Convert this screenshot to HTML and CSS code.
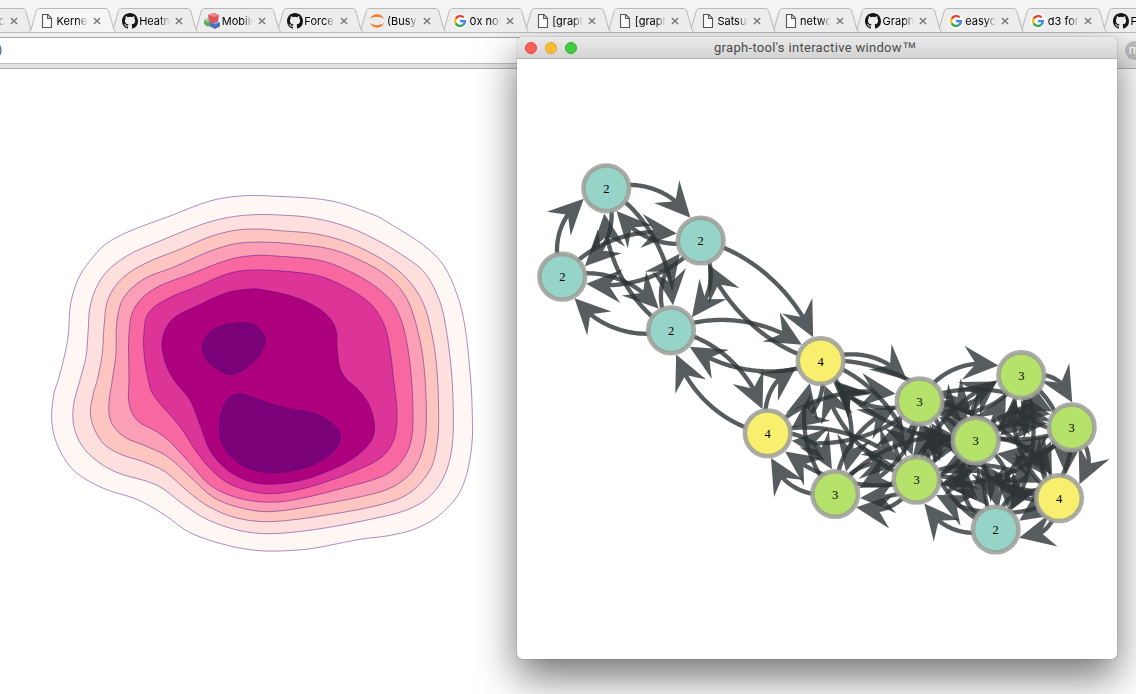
FILE: index.html
```
<!DOCTYPE html>
<html lang="en">
<head>
<meta charset="utf-8">
<title>Kernel density</title>
<link rel="stylesheet" href="styles.css">
</head>
<body>
<svg class="symbols" aria-hidden="true">
  <symbol id="page" viewBox="0 0 16 16"><path d="M3.5 1.5h5.3l3.7 3.8v9.2h-9z" fill="#fbfbfb" stroke="#555" stroke-width="1.1"/><path d="M8.6 1.5v4h4" fill="none" stroke="#555" stroke-width="1.1"/></symbol>
  <symbol id="github" viewBox="0 0 16 16"><path fill="#171515" d="M8 0C3.58 0 0 3.58 0 8c0 3.54 2.29 6.53 5.47 7.59.4.07.55-.17.55-.38 0-.19-.01-.82-.01-1.49-2.01.37-2.53-.49-2.69-.94-.09-.23-.48-.94-.82-1.13-.28-.15-.68-.52-.01-.53.63-.01 1.08.58 1.23.82.72 1.21 1.87.87 2.33.66.07-.52.28-.87.51-1.07-1.78-.2-3.64-.89-3.64-3.95 0-.87.31-1.59.82-2.15-.08-.2-.36-1.02.08-2.12 0 0 .67-.21 2.2.82a7.6 7.6 0 0 1 4 0c1.53-1.04 2.2-.82 2.2-.82.44 1.1.16 1.92.08 2.12.51.56.82 1.27.82 2.15 0 3.07-1.87 3.75-3.65 3.95.29.25.54.73.54 1.48 0 1.07-.01 1.93-.01 2.2 0 .21.15.46.55.38A8 8 0 0 0 16 8c0-4.42-3.58-8-8-8z"/></symbol>
  <symbol id="google" viewBox="0 0 16 16"><circle cx="8" cy="8" r="7.8" fill="#fff"/><g fill="none" stroke-width="2.3"><path d="M3.6 5.6A5 5 0 0 1 11.6 4.5" stroke="#ea4335"/><path d="M3.6 10.4A5 5 0 0 1 3.6 5.6" stroke="#fbbc05"/><path d="M11.3 11.7A5 5 0 0 1 3.6 10.4" stroke="#34a853"/><path d="M8 8.1h5A5 5 0 0 1 11.3 11.7" stroke="#4285f4"/></g></symbol>
  <symbol id="jupyter" viewBox="0 0 16 16"><path d="M1 6.2C2.2 3 5 1.300 8 1.300s5.800 1.700 7 4.900C13.300 4.500 11 3.800 8 3.800S2.700 4.500 1 6.200zM1 9.800c1.200 3.200 4 4.900 7 4.900s5.800-1.700 7-4.900c-1.700 1.700-4 2.400-7 2.400S2.700 11.500 1 9.800z" fill="#f37726"/></symbol>
  <symbol id="cubes" viewBox="0 0 16 16"><path d="M0 7l4-2 3 2v5l-3 2-4-3z" fill="#69a765"/><path d="M0 7l4-2 3 2-3 2z" fill="#a4d19d"/><path d="M6 9l5-1.500 5 2v4L11 16l-5-2.500z" fill="#4b72b5"/><path d="M6 9l5-1.500 5 2-5 2z" fill="#86a7db"/><path d="M4 2l6-2 5 2-1 6-5 2.500L5 8z" fill="#e0555b"/><path d="M4 2l6-2 5 2-5 2z" fill="#f08486"/></symbol>
  <symbol id="close" viewBox="0 0 8 8"><path d="M.9.9l6.200 6.200M7.100.9L.9 7.100" stroke="#777" stroke-width="1.400" fill="none"/></symbol>
  <symbol id="tabshape" viewBox="0 0 89 25"><path class="shape" d="M0 24.500C2 24.500 2.500 22.500 3.200 21L8 4C8.800 1.500 9.500.5 12 .5H77C79.500.5 80.200 1.500 81 4L85.800 21C86.500 22.500 87 24.500 89 24.500"/></symbol>
</svg>
<div class="browser">
  <nav class="tabs" id="tabs"></nav>
  <div class="toolbar">
    <div class="address">)</div>
    <div class="extension">m</div>
  </div>
  <main class="page">
    <svg class="density" id="density" viewBox="0 69 500 625" width="500" height="625"></svg>
  </main>
</div>
<section class="window">
  <header class="titlebar">
    <span class="light red"></span><span class="light amber"></span><span class="light green"></span>
    <h1 class="title">graph-tool's interactive window<span class="mark">™</span></h1>
  </header>
  <svg class="graph" id="graph" viewBox="517 59 600 600" width="600" height="600"></svg>
</section>
<script src="main.js"></script>
</body>
</html>
```
FILE: styles.css
```
* { box-sizing: border-box; }
body { margin: 0; width: 1136px; height: 694px; overflow: hidden; position: relative; background: #fff; font-family: Roboto, "Liberation Sans", sans-serif; }
.symbols { position: absolute; width: 0; height: 0; }
.browser { display: flex; flex-direction: column; height: 694px; }
.tabs { display: flex; height: 33px; padding-top: 8px; background: linear-gradient(#f6f6f6, #f2f2f2); border-bottom: 1px solid #bcbcbc; overflow: hidden; }
.tab { position: relative; flex: none; display: flex; align-items: center; width: 89px; height: 25px; margin-right: -6.4px; padding-left: 11.500px; }
.tab:first-child { margin-left: -55.100px; }
.tab .bg { position: absolute; inset: 0; width: 89px; height: 25px; fill: #ededed; stroke: #b9b9b9; }
.tab.active .bg { fill: #f6f6f6; }
.tab .icon { position: relative; width: 16px; height: 16px; flex: none; }
.tab .label { position: relative; width: 31px; margin-left: 1.500px; overflow: hidden; white-space: nowrap; font: 11px/16px Inter, sans-serif; color: #000; mask-image: linear-gradient(90deg, #000 66%, transparent); }
.tab.cut .label { display: flex; justify-content: flex-end; }
.tab .close { position: relative; width: 8px; height: 8px; margin-left: 5px; }
.toolbar { display: flex; align-items: flex-start; justify-content: space-between; height: 36px; padding-top: 4px; background: linear-gradient(#f3f3f3, #e2e2e2); border-bottom: 1px solid #b0b0b0; }
.address { width: 1040px; height: 27px; border: solid #a5a5a5; border-width: 1px 0; border-bottom-color: #bebebe; background: #fff; font: 12px/24px Roboto, sans-serif; color: #33507c; text-indent: -2px; }
.extension { flex: none; width: 19px; height: 19px; margin: 4px -8px 0 0; border-radius: 50%; background: #bdbdbd; color: #fff; font: 13px/17px Roboto, sans-serif; text-align: center; }
.page { flex: 1; background: #fff; }
.density { display: block; }
.density path { stroke: #3f007d; stroke-opacity: .55; stroke-width: .8; }
.window { position: absolute; left: 517px; top: 37px; width: 600px; height: 622px; border-radius: 5px; overflow: hidden; background: #fff; box-shadow: 0 0 1px rgba(0,0,0,.7), 0 18px 40px rgba(0,0,0,.55); }
.titlebar { display: flex; align-items: center; gap: 8px; height: 22px; padding-left: 8px; background: linear-gradient(#ebebeb, #d3d3d3); border-bottom: 1px solid #b1b1b1; }
.light { width: 12px; height: 12px; border-radius: 50%; border: 1px solid; }
.red { background: #fb5f5b; border-color: #df4744; }
.amber { background: #fcbc34; border-color: #dfa023; }
.green { background: #41cd3d; border-color: #2daf2a; }
.title { margin: 0 0 0 129px; font: 400 13px/21px Roboto, sans-serif; letter-spacing: .31px; color: #4b4b4b; white-space: nowrap; }
.mark { font: 14px/1 "Liberation Sans", sans-serif; }
.graph { display: block; }
.edge { opacity: .8; fill: #2e3436; }
.edge .shaft { fill: none; stroke: #2e3436; stroke-width: 4.300; }
.node circle { stroke: #9c9e99; stroke-opacity: .85; stroke-width: 4.600; }
.node text { font: 12.500px "Liberation Serif", serif; text-anchor: middle; fill: #000; }
```
FILE: main.js
```
const tabs = [
  ["page", "pc"], ["page", "Kernel"], ["github", "Heatmap"], ["cubes", "Mobile"], ["github", "Force-"],
  ["jupyter", "(Busy)"], ["google", "0x not"], ["page", "[graph"], ["page", "[graph"], ["page", "Satsum"],
  ["page", "netwo"], ["github", "Graph-"], ["google", "easyc"], ["google", "d3 for"], ["github", "Force"]
];
const use = (id, cls) => `<svg class="${cls}"><use href="#${id}"/></svg>`;
document.getElementById("tabs").innerHTML = tabs.map(([icon, label], i) =>
  `<div class="tab${i === 0 ? " cut" : i === 1 ? " active" : ""}" style="z-index:${i === 1 ? 30 : 20 - i}">` +
  use("tabshape", "bg") + use(icon, "icon") + `<span class="label">${label}</span>` + use("close", "close") + `</div>`).join("");

// Density contours, from the lowest level to the highest
const contours = [
  ["#fff7f3", "58.3,380 67.7,340 70.7,303.3 79.3,276.7 93.3,256.7 106.7,243.3 130,231 170,216 210,201 240,196 270,196 330,200.7 375,215.3 388.3,222.7 423.3,245 443.3,265 457.3,295 465,326.7 470.7,380 472,403.3 471.7,446.7 461.7,488.3 441.7,513.3 416.7,528.3 388.3,535.7 360,539.3 313.3,548.3 286.7,550.7 260,550.7 230,546 190,532.7 163.3,514 136.7,499.3 103.3,488.3 73.3,470 56.7,443.3 51.7,420 54,393.3"],
  ["#fde0dd", "80,380 86,356.7 88,333.3 90.7,303.3 103.3,275.7 126.7,256 160,241 200,225 226.7,217.7 253.3,214.7 280,215 313.3,218 350,227.7 380,241.7 403.3,255.7 423.3,271 435,290 443.3,313.3 451,366.7 453.3,413.3 451.7,450 443.3,478.3 428.3,497.7 406.7,510 373.3,518.7 316.7,529.3 270,533.7 240,530.7 206.7,519.3 183.3,504.3 156.7,485 113.3,471 86.7,451.7 74.7,430 73.3,406.7"],
  ["#fcc5c0", "97.3,380 102.3,353.3 104,326.7 108.3,298.3 123.3,277.3 146.7,262.7 180,249.3 210,236.7 235,230.3 260,229 280,230.7 316.7,234 350,243.3 383.3,260 406.7,278.3 423.3,303.3 431.7,333.3 436.7,366.7 438.7,413.3 437.3,443.3 430,470 410,492.7 383.3,504 326.7,515 270,521.7 236.7,518 210,507.3 190,493.3 165,471.7 143.3,461.7 120,454 101.7,441.7 90.7,416.7 93.3,393.3"],
  ["#fa9fb5", "112.3,380 116,353.3 116.7,323.3 123.3,298.3 143.3,279.3 173.3,267.3 193.3,258.3 216.7,248.7 240,243 270,242.3 300,244.7 333.3,249.7 366.7,263.3 390,278.3 406.7,298.3 416.7,326.7 423.3,360 426.3,406.7 424.3,443.3 413.3,470 393.3,486.7 366.7,495.3 323.3,504 270,511.7 240,507.7 213.3,497.3 190,476.7 166.7,456 143.3,445 125,437.3 111.7,423.3 108.7,406.7"],
  ["#f768a1", "129,380 129,333.3 134.3,308.3 153.3,289.3 190,274.3 230,259.3 256.7,255.3 280,256.3 316.7,259.7 340,267 370,282.7 391.7,301.7 403.3,326.7 410.7,370 413,420 410,445 400,463.3 383.3,476 343.3,488 300,498.7 270,502.3 236.7,497.7 210,485 190,463.3 170,441.7 156.7,431.7 136.7,420 129,403.3"],
  ["#dd3497", "148.3,380 144.7,360 143.7,336.7 148.3,313.3 168.3,298.3 196.7,286.7 226.7,274 246.7,270.3 270,270.3 310,274 330,279.7 356.7,293.3 373.3,306.7 385,326.7 390,350 393.3,376.7 397,413.3 394.3,438.3 383.3,455.7 360,469 326.7,481.7 293.3,491 266.7,493.7 240,488.3 220,477.7 200,456.7 180,426.7 153.3,395"],
  ["#ae017e", "174,380 165,361.7 162.3,340 171.7,320 196.7,306 226.7,292.7 250,289 260,289.3 293.3,296.7 320,309.3 335,326.7 337.3,350 340,368.3 347.3,380 356.7,388 368.3,403.3 374.3,423.3 371.7,440 353.3,458.3 326.7,471.7 296.7,481.3 260,483.7 233,474 211.7,453.3 200,425 190,400"],
  ["#7a0177", "202.3,348.3 205,338.3 216.7,327.7 236.7,323 253.3,324.3 264,335 265,343.3 258.3,356.7 243.3,370 230.7,374.7 220,370.7 206.7,360"],
  ["#7a0177", "228.3,398.3 240,394 253.3,397.7 280,406.7 313.3,413 330,421.7 340,433.3 338.3,445 326.7,457.3 306.7,467.3 276.7,472.7 256.7,470.7 236.7,461.7 222.7,445 219.3,426.7 221.7,411.7"]
];
function smooth(text) {
  const p = text.split(" ").map(s => s.split(",").map(Number)), n = p.length;
  let d = `M${p[0]}`;
  for (let i = 0; i < n; i++) {
    const a = p[(i + n - 1) % n], b = p[i], c = p[(i + 1) % n], e = p[(i + 2) % n];
    const len = Math.hypot(c[0] - b[0], c[1] - b[1]) / 3;
    const l1 = Math.hypot(c[0] - a[0], c[1] - a[1]), l2 = Math.hypot(e[0] - b[0], e[1] - b[1]);
    d += `C${b[0] + (c[0] - a[0]) / l1 * len},${b[1] + (c[1] - a[1]) / l1 * len} ${c[0] - (e[0] - b[0]) / l2 * len},${c[1] - (e[1] - b[1]) / l2 * len} ${c}`;
  }
  return d + "Z";
}
document.getElementById("density").innerHTML = contours.map(([c, t]) => `<path fill="${c}" d="${smooth(t)}"/>`).join("");

// Graph
const teal = "#97d4c8", yellow = "#f9ef6e", green = "#b5e26a";
const nodes = {
  A: [606.3, 188.3, 2, teal], B: [700.7, 240.500, 2, teal], C: [562.3, 276.700, 2, teal], D: [671, 330.300, 2, teal],
  E: [820.6, 361, 4, yellow], F: [767.7, 433.300, 4, yellow], G: [1021.300, 375.200, 3, green], H: [919.600, 401.300, 3, green],
  I: [975.700, 440.500, 3, green], J: [1071.700, 427.300, 3, green], K: [835.200, 494, 3, green], L: [916.500, 479.700, 3, green],
  M: [1059, 498.200, 4, yellow], N: [995.700, 529.500, 2, teal]
};
const pairs = "AB AC AD BC BD CD BE DE DF EF EH EI EK EL FK FH FL KH KL KI HG HI HL HJ HN HM GI GJ GL GM GN IJ IL IM IN JL JM JN LM LN MN".split(" ");
function edge(from, to) {
  const [x0, y0] = nodes[from], [x1, y1] = nodes[to];
  const dx = x1 - x0, dy = y1 - y0, len = Math.hypot(dx, dy), bow = 31, k = .28;
  const nx = dy / len * bow, ny = -dx / len * bow;
  const cx0 = x0 + dx * k + nx, cy0 = y0 + dy * k + ny, cx1 = x1 - dx * k + nx, cy1 = y1 - dy * k + ny;
  const at = t => { const u = 1 - t, a = u * u * u, b = 3 * u * u * t, c = 3 * u * t * t, e = t * t * t;
    return [a * x0 + b * cx0 + c * cx1 + e * x1, a * y0 + b * cy0 + c * cy1 + e * y1]; };
  let tip = null, base = null, shaft = [];
  for (let t = 1; t > 0; t -= .004) {
    const p = at(t);
    if (!tip) { if (Math.hypot(p[0] - x1, p[1] - y1) >= 24.600) tip = p; continue; }
    if (!base) { if (Math.hypot(p[0] - tip[0], p[1] - tip[1]) >= 22) { base = p; shaft.push(p); } continue; }
    if (Math.hypot(p[0] - x0, p[1] - y0) < 23) break;
    shaft.push(p);
  }
  if (!base) return "";
  const l = Math.hypot(tip[0] - base[0], tip[1] - base[1]), ux = (tip[0] - base[0]) / l, uy = (tip[1] - base[1]) / l;
  const q = (back, side) => [(tip[0] - ux * back - uy * side).toFixed(1), (tip[1] - uy * back + ux * side).toFixed(1)];
  return `<g class="edge"><path class="shaft" d="M${shaft.map(p => p.map(v => v.toFixed(1))).join("L")}"/><path d="M${tip}L${q(35.400, 17)}L${q(22.500, 0)}L${q(35.400, -17)}Z"/></g>`;
}
document.getElementById("graph").innerHTML =
  pairs.map(p => edge(p[0], p[1]) + edge(p[1], p[0])).join("") +
  Object.values(nodes).map(([x, y, n, c]) => `<g class="node"><circle cx="${x}" cy="${y}" r="22.800" fill="${c}"/><text x="${x}" y="${y + 4.500}">${n}</text></g>`).join("");
```
